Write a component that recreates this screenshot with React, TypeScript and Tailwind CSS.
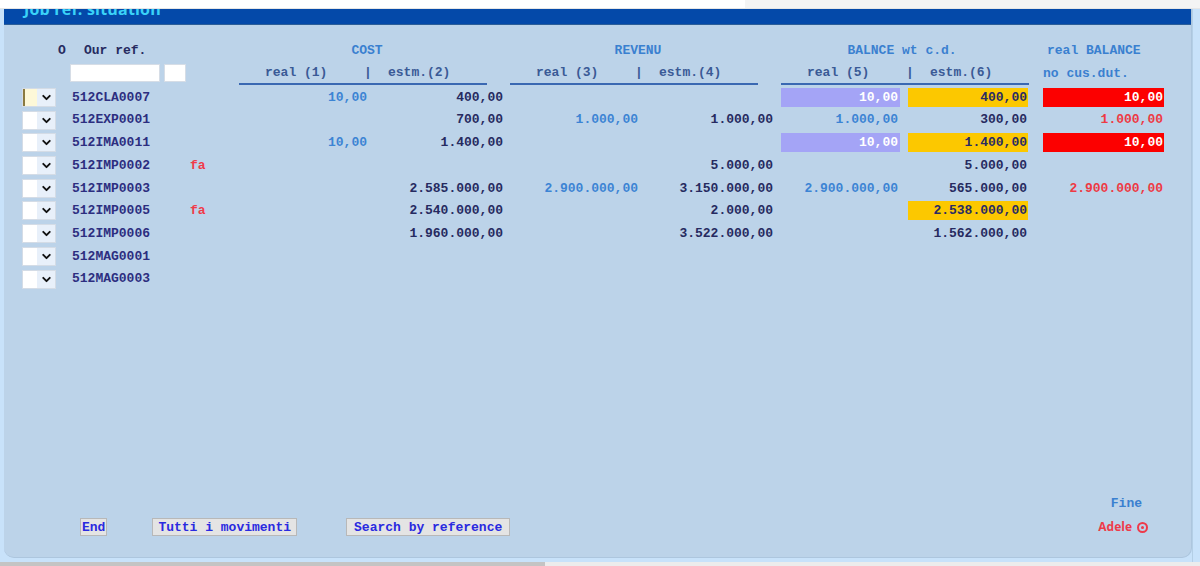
import { ChevronDown } from "lucide-react";

type Cell = { v: string; tone?: "blue" | "dark" | "red"; bg?: "purple" | "yellow" | "red" };

type Row = {
  ref: string;
  fa?: boolean;
  cells: (Cell | null)[];
};

const rows: Row[] = [
  {
    ref: "512CLA0007",
    cells: [
      { v: "10,00", tone: "blue" },
      { v: "400,00", tone: "dark" },
      null,
      null,
      { v: "10,00", bg: "purple" },
      { v: "400,00", bg: "yellow" },
      { v: "10,00", bg: "red" },
    ],
  },
  {
    ref: "512EXP0001",
    cells: [
      null,
      { v: "700,00", tone: "dark" },
      { v: "1.000,00", tone: "blue" },
      { v: "1.000,00", tone: "dark" },
      { v: "1.000,00", tone: "blue" },
      { v: "300,00", tone: "dark" },
      { v: "1.000,00", tone: "red" },
    ],
  },
  {
    ref: "512IMA0011",
    cells: [
      { v: "10,00", tone: "blue" },
      { v: "1.400,00", tone: "dark" },
      null,
      null,
      { v: "10,00", bg: "purple" },
      { v: "1.400,00", bg: "yellow" },
      { v: "10,00", bg: "red" },
    ],
  },
  {
    ref: "512IMP0002",
    fa: true,
    cells: [null, null, null, { v: "5.000,00", tone: "dark" }, null, { v: "5.000,00", tone: "dark" }, null],
  },
  {
    ref: "512IMP0003",
    cells: [
      null,
      { v: "2.585.000,00", tone: "dark" },
      { v: "2.900.000,00", tone: "blue" },
      { v: "3.150.000,00", tone: "dark" },
      { v: "2.900.000,00", tone: "blue" },
      { v: "565.000,00", tone: "dark" },
      { v: "2.900.000,00", tone: "red" },
    ],
  },
  {
    ref: "512IMP0005",
    fa: true,
    cells: [
      null,
      { v: "2.540.000,00", tone: "dark" },
      null,
      { v: "2.000,00", tone: "dark" },
      null,
      { v: "2.538.000,00", bg: "yellow" },
      null,
    ],
  },
  {
    ref: "512IMP0006",
    cells: [
      null,
      { v: "1.960.000,00", tone: "dark" },
      null,
      { v: "3.522.000,00", tone: "dark" },
      null,
      { v: "1.562.000,00", tone: "dark" },
      null,
    ],
  },
  { ref: "512MAG0001", cells: [null, null, null, null, null, null, null] },
  { ref: "512MAG0003", cells: [null, null, null, null, null, null, null] },
];

// widths + trailing gaps for the 7 number columns
const cols = [
  { w: "w-[136px]", pad: "pr-[8px]" },
  { w: "w-[136px]", pad: "pr-[8px]" },
  { w: "w-[135px]", pad: "pr-[8px]" },
  { w: "w-[135px]", pad: "pr-[8px]" },
  { w: "w-[119px] mr-[8px]", pad: "pr-[2px]" },
  { w: "w-[120px] mr-[15px]", pad: "pr-[1px]" },
  { w: "w-[121px]", pad: "pr-[1px]" },
];

function NumCell({ cell, i }: { cell: Cell | null; i: number }) {
  const c = cols[i];
  let cls = "";
  if (cell?.bg === "purple") cls = "bg-[#a4a4f6] text-white";
  else if (cell?.bg === "yellow") cls = "bg-[#fcc800] text-[#2a2c64]";
  else if (cell?.bg === "red") cls = "bg-[#fc0000] text-white";
  else if (cell?.tone === "blue") cls = "text-[#3c84d4]";
  else if (cell?.tone === "red") cls = "text-[#ee3a44]";
  else cls = "text-[#262a60]";
  return (
    <div className={`${c.w} ${c.pad} h-[19px] flex items-center justify-end ${cell ? cls : ""}`}>
      {cell?.v}
    </div>
  );
}

function Select({ focused }: { focused?: boolean }) {
  return (
    <div className="w-[34px] h-[19px] flex border border-[#d4dce6] bg-white">
      <div className="w-[14px] h-full flex">
        {focused && <div className="w-[2px] h-full bg-[#8a7a40]" />}
        {focused && <div className="flex-1 h-full bg-[#fdf8d8]" />}
      </div>
      <div className="flex-1 flex items-center justify-center bg-[#e8f0fa]">
        <ChevronDown size={13} strokeWidth={3.5} color="#111" />
      </div>
    </div>
  );
}

function GroupHead({ left, right }: { left: string; right: string }) {
  return (
    <div className="w-[248px] h-[21px] flex items-end pb-[1px] border-b-2 border-[#3a68b2] text-[#3a5a96] whitespace-pre">
      <span className="ml-[26px] w-[99px]">{left}</span>
      <span className="w-[24px]">|</span>
      <span>{right}</span>
    </div>
  );
}

function Btn({ label, px }: { label: string; px: string }) {
  return (
    <button className={`h-[18px] ${px} bg-[#e4e4e4] border border-[#b8b8b8] text-[#2a2ae0] text-[13px] font-bold leading-none font-['Liberation_Mono',monospace]`}>
      {label}
    </button>
  );
}

export default function App() {
  return (
    <div className="w-[1200px] h-[566px] overflow-hidden bg-[#f4f4f4] flex flex-col">
      {/* browser strip */}
      <div className="h-[9px] flex shrink-0">
        <div className="w-[745px] bg-white border-b border-[#e6e6e6]" />
        <div className="flex-1 bg-[#f4f4f4] border-b border-[#e6e6e6]" />
      </div>
      <div className="flex-1 flex bg-[#c8e2fa]">
        <div className="ml-[4px] w-[1188px] h-[549px] flex flex-col bg-[#bcd3e9] rounded-b-[10px] border-b border-r border-[#adc6de] font-['Liberation_Mono',monospace] text-[13px] font-bold">
          {/* title bar */}
          <div className="h-[16px] bg-[#0449a9] border-b border-[#2c5e98] overflow-hidden shrink-0">
            <div className="pl-[20px] -mt-[10px] text-[16px] leading-[20px] text-[#3ad2f8] font-['Open_Sans',sans-serif] font-bold tracking-[0.2px]">
              Job ref. situation
            </div>
          </div>

          {/* header row 1 */}
          <div className="flex items-center h-[20px] mt-[16px]">
            <div className="w-[54px]" />
            <div className="w-[26px] text-[#262a60]">O</div>
            <div className="w-[159px] text-[#262a60]">Our ref.</div>
            <div className="w-[248px] text-center text-[#3a80d0]">COST</div>
            <div className="w-[23px]" />
            <div className="w-[248px] text-center text-[#3a80d0]">REVENU</div>
            <div className="w-[23px]" />
            <div className="w-[248px] text-center text-[#3a80d0] pr-[14px]">BALNCE wt c.d.</div>
            <div className="w-[14px]" />
            <div className="text-[#3a80d0]">real BALANCE</div>
          </div>

          {/* header row 2 */}
          <div className="flex items-end h-[24px]">
            <div className="w-[66px]" />
            <div className="w-[90px] h-[18px] bg-white border border-[#d6dde6] mb-[3px]" />
            <div className="w-[22px] h-[18px] bg-white border border-[#d6dde6] mb-[3px] ml-[4px]" />
            <div className="w-[53px]" />
            <GroupHead left="real (1)" right="estm.(2)" />
            <div className="w-[23px]" />
            <GroupHead left="real (3)" right="estm.(4)" />
            <div className="w-[23px]" />
            <GroupHead left="real (5)" right="estm.(6)" />
            <div className="w-[14px]" />
            <div className="text-[#3a80d0] h-[22px] flex items-end pb-[2px]">no cus.dut.</div>
          </div>

          {/* data rows */}
          <div className="flex flex-col gap-[3.7px] mt-[3px]">
            {rows.map((r, ri) => (
              <div key={r.ref} className="flex items-center h-[19px]">
                <div className="w-[18px]" />
                <Select focused={ri === 0} />
                <div className="w-[16px]" />
                <div className="w-[118px] text-[#2c2e80]">{r.ref}</div>
                <div className="w-[49px] text-[#f03a4a]">{r.fa ? "fa" : ""}</div>
                {r.cells.map((c, i) => (
                  <NumCell key={i} cell={c} i={i} />
                ))}
              </div>
            ))}
          </div>

          <div className="flex-1" />

          {/* footer */}
          <div className="flex items-end justify-end pr-[49px] text-[#3a80d0]">Fine</div>
          <div className="flex items-center h-[20px] mt-[4px] mb-[20px]">
            <div className="w-[76px]" />
            <Btn label="End" px="px-[1px]" />
            <div className="w-[45px]" />
            <Btn label="Tutti i movimenti" px="px-[5px]" />
            <div className="w-[49px]" />
            <Btn label="Search by reference" px="px-[7px]" />
            <div className="flex-1" />
            <div className="mr-[43px] text-[#ee3a4a] text-[12px] font-['Open_Sans',sans-serif] font-bold flex items-center gap-[5px]">
              Adele
              <span className="w-[11px] h-[11px] rounded-full border-2 border-[#ee3a4a] flex items-center justify-center">
                <span className="w-[3px] h-[3px] rounded-full bg-[#ee3a4a]" />
              </span>
            </div>
          </div>
        </div>
        <div className="w-[1px] bg-[#b4cfe6]" />
      </div>
      {/* bottom strip */}
      <div className="h-[4px] flex shrink-0">
        <div className="w-[545px] bg-[#c4c4c4]" />
        <div className="flex-1 bg-[#ececec]" />
      </div>
    </div>
  );
}
